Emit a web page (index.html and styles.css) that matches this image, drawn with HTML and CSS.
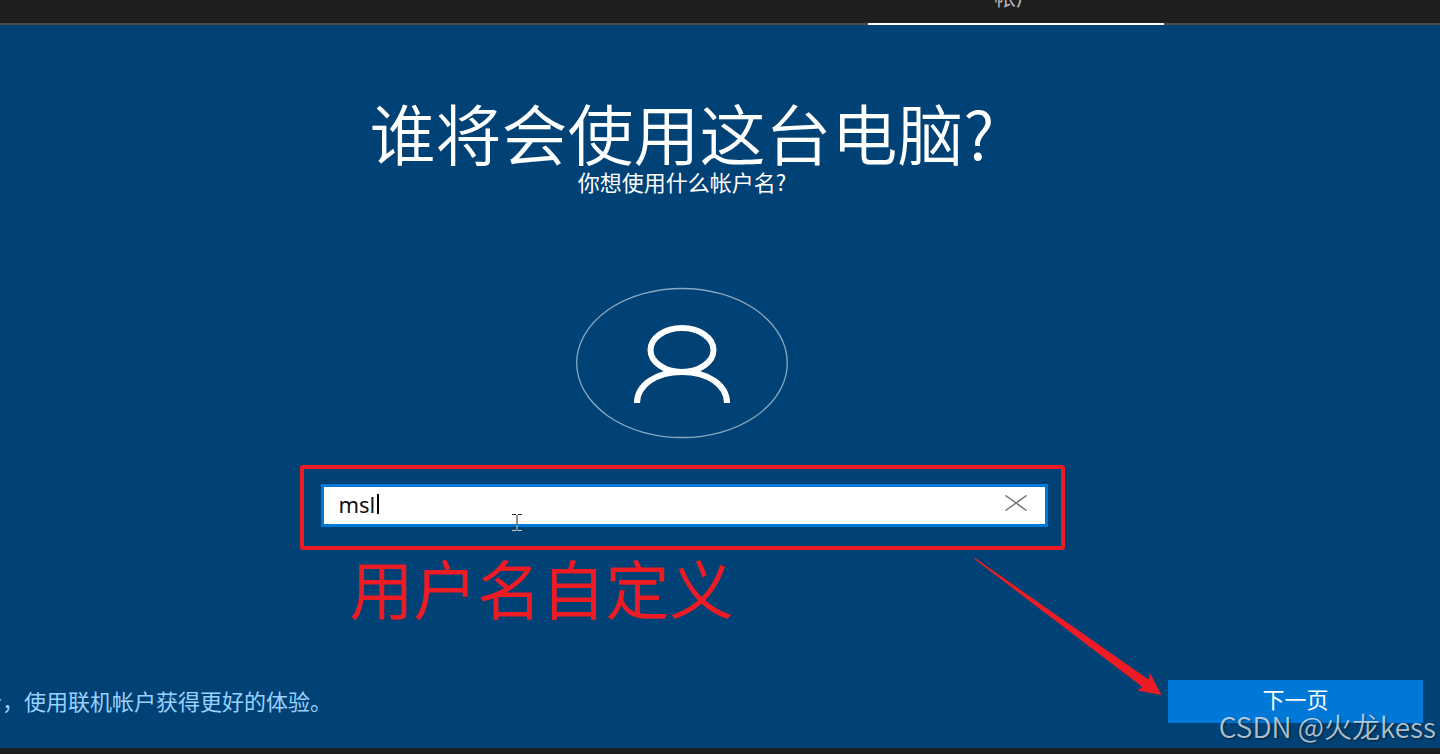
FILE: index.html
```html
<!DOCTYPE html>
<html lang="zh-CN">
<head>
  <meta charset="UTF-8" />
  <meta name="viewport" content="width=device-width, initial-scale=1" />
  <title>谁将会使用这台电脑?</title>
  <link rel="stylesheet" href="styles.css">
</head>
<body>

  <nav class="tabs">
    <a class="tab" href="#account">帐户</a>
  </nav>

  <main id="account">
    <form class="setup" id="setupForm">
      <h1>谁将会使用这台电脑?</h1>
      <label class="subtitle" for="userName">你想使用什么帐户名?</label>

      <svg class="avatar" viewBox="0 0 212 152" aria-hidden="true">
        <ellipse class="ring" cx="106" cy="76" rx="105.3" ry="74.5" />
        <ellipse class="person" cx="106" cy="63" rx="31.500" ry="22" />
        <path class="person" d="M61 116C61 98 80 85 106 85S151 98 151 116" />
      </svg>

      <div class="highlight">
        <div class="field">
          <input type="text" id="userName" value="msl" autocomplete="off" />
          <span class="caret"></span>
          <button type="button" class="clear" aria-label="清除">
            <svg width="22" height="16" viewBox="0 0 22 16"><path d="M.5.5l21 15M21.500.5l-21 15" /></svg>
          </button>
          <svg class="pointer" width="12" height="18" viewBox="0 0 12 18" aria-hidden="true">
            <path class="pointer-dark" d="M1 .5h4M7 .5h4M6 1v10" />
            <path class="pointer-light" d="M6 11v6M1 16.500h4M7 16.500h4" />
          </svg>
        </div>
      </div>
      <p class="note">用户名自定义</p>
    </form>

    <div class="actions">
      <a class="online" href="#online">或者，使用联机帐户获得更好的体验。</a>
      <div class="next-wrap">
        <svg class="arrow" width="190" height="140" viewBox="0 0 190 140" aria-hidden="true">
          <path d="M0 .8L1 0 174.500 121.500 176 115 187.500 137 163.500 132.500 168.500 129z" />
        </svg>
        <button type="submit" form="setupForm" class="next">下一页</button>
      </div>
    </div>
  </main>

  <footer></footer>
  <div class="watermark">CSDN @火龙kess</div>

</body>
</html>
```

FILE: styles.css
```css
* {
  box-sizing: border-box;
  margin: 0;
  padding: 0;
}

body {
  font-family: "Noto Sans CJK SC", sans-serif;
  background: #1f1f1f;
  color: #fff;
  min-height: 100vh;
  display: flex;
  flex-direction: column;
  overflow: hidden;
  position: relative;
}

.tabs {
  height: 25px;
  display: flex;
  justify-content: flex-end;
  align-items: flex-end;
  padding-right: 276px;
  border-bottom: 2px solid #4c4c4c;
}

.tab {
  width: 296px;
  height: 44px;
  margin-bottom: -2px;
  border-bottom: 2px solid #fff;
  color: #b4b4b4;
  font-size: 22px;
  line-height: 28px;
  text-align: center;
  text-decoration: none;
}

main {
  flex: 1;
  background: #004275;
  display: flex;
  flex-direction: column;
  justify-content: space-between;
}

.setup {
  display: flex;
  flex-direction: column;
  align-items: center;
  padding: 70px 76px 0 0;
}

h1 {
  font-weight: 350;
  font-size: 66px;
  line-height: 72px;
}

.subtitle {
  font-size: 22px;
  line-height: 28px;
}

.avatar {
  width: 212px;
  height: 152px;
  margin: 92px 0 26px;
  fill: none;
}

.ring {
  stroke: #86a8c1;
  stroke-width: 1.3;
}

.person {
  stroke: #fff;
  stroke-width: 6;
}

/* red marker frame round the text box */
.highlight {
  width: 765px;
  max-width: 100%;
  padding: 15px 13px 19px 17px;
  border: 4px solid #ed1c24;
  border-radius: 3px;
}

.field {
  position: relative;
}

#userName {
  display: block;
  width: 100%;
  height: 43px;
  padding: 0 60px 4px 15px;
  border: 3px solid #0078d7;
  background: #fff;
  color: #111;
  font-family: "Noto Sans", sans-serif;
  font-size: 22px;
  outline: none;
}

.caret {
  position: absolute;
  left: 56px;
  top: 10px;
  width: 2px;
  height: 20px;
  background: #000;
}

.clear {
  position: absolute;
  right: 16px;
  top: 3px;
  width: 32px;
  height: 34px;
  border: none;
  background: none;
  cursor: pointer;
}

.clear svg {
  fill: none;
  stroke: #777;
  stroke-width: 1.5;
}

.pointer {
  position: absolute;
  left: 190px;
  top: 30px;
  fill: none;
}

.pointer-dark {
  stroke: #222;
}

.pointer-light {
  stroke: #d9c9b4;
}

.note {
  width: 765px;
  max-width: 100%;
  padding-left: 50px;
  margin-top: 4px;
  color: #ed1c24;
  font-size: 64px;
  line-height: 64px;
}

.actions {
  display: flex;
  justify-content: space-between;
  align-items: center;
  padding: 0 17px 25px 0;
}

/* starts outside the left edge of the window */
.online {
  margin-left: -42px;
  padding-bottom: 4px;
  color: #99d1ff;
  font-size: 22px;
  line-height: 28px;
  text-decoration: none;
}

.next-wrap {
  position: relative;
}

.next {
  display: block;
  width: 255px;
  height: 43px;
  padding-bottom: 8px;
  border: none;
  background: #0078d7;
  color: #fff;
  font-family: inherit;
  font-size: 22px;
  line-height: 28px;
  cursor: pointer;
}

.arrow {
  position: absolute;
  right: 259px;
  bottom: 25px;
  fill: #ed1c24;
}

footer {
  height: 6px;
}

.watermark {
  position: absolute;
  right: 4px;
  bottom: 10px;
  color: rgba(255, 255, 255, 0.7);
  font-size: 28px;
  font-weight: 350;
  line-height: 36px;
  text-shadow: 1px 1px 2px rgba(0, 0, 0, 0.5);
}
```
